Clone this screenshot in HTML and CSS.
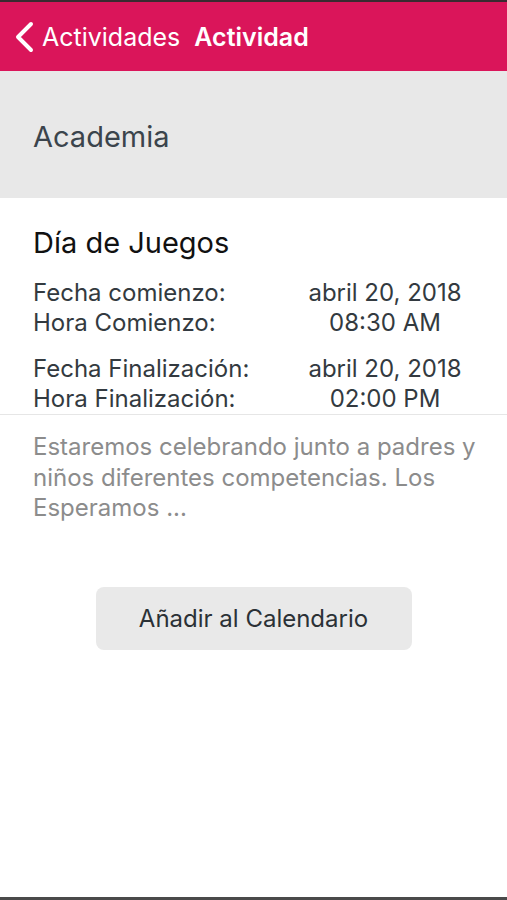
FILE: index.html
```html
<!DOCTYPE html>
<html lang="es">
<head>
    <meta charset="UTF-8">
    <meta name="viewport" content="width=device-width, initial-scale=1.0">
    <title>Actividad</title>
    <link rel="stylesheet" href="styles.css">
</head>
<body>
    <div class="screen">
        <header class="navbar">
            <a class="back" href="#">
                <svg class="chevron" width="20" height="32" viewBox="0 0 20 32">
                    <path d="M17 3 L4 16 L17 29" fill="none" stroke="#fff" stroke-width="4" stroke-linecap="round" stroke-linejoin="round"/>
                </svg>
                <span>Actividades</span>
            </a>
            <span class="nav-title">Actividad</span>
        </header>

        <section class="category">Academia</section>

        <section class="event">
            <h1>Día de Juegos</h1>
            <div class="times">
                <span>Fecha comienzo:</span><span class="val">abril 20, 2018</span>
                <span>Hora Comienzo:</span><span class="val">08:30 AM</span>
            </div>
            <div class="times">
                <span>Fecha Finalización:</span><span class="val">abril 20, 2018</span>
                <span>Hora Finalización:</span><span class="val">02:00 PM</span>
            </div>
        </section>

        <p class="description">Estaremos celebrando junto a padres y niños diferentes competencias. Los Esperamos ...</p>

        <div class="actions">
            <button class="add-cal">Añadir al Calendario</button>
        </div>
    </div>
</body>
</html>
```

FILE: styles.css
```css
* {
    box-sizing: border-box;
}
body {
    margin: 0;
    background: #fff;
    font-family: Inter, "Liberation Sans", Arial, sans-serif;
}
.screen {
    height: 900px;
    display: flex;
    flex-direction: column;
    border-top: 2px solid #3a2a30;
    border-bottom: 3px solid #4a4a4a;
}
.navbar {
    height: 69px;
    background: #da155a;
    display: flex;
    align-items: center;
    padding: 0 0 0 14px;
    color: #fff;
    font-size: 25px;
}
.back {
    display: flex;
    align-items: center;
    gap: 8px;
    color: #fff;
    text-decoration: none;
}
.nav-title {
    font-weight: 600;
    margin-left: 14px;
}
.category {
    height: 127px;
    background: #e8e8e8;
    display: flex;
    align-items: center;
    padding: 4px 33px 0;
    color: #3b444c;
    font-size: 29px;
}
.event {
    padding: 29px 33px 0;
    border-bottom: 1px solid #e6e6e6;
}
.event h1 {
    margin: 0 0 19px;
    font-weight: normal;
    font-size: 29px;
    line-height: 32px;
    color: #111;
}
.times {
    display: grid;
    grid-template-columns: 263px 1fr;
    font-size: 24px;
    line-height: 30px;
    color: #333a40;
    margin-bottom: 16px;
}
.times:last-child {
    margin-bottom: 0;
}
.times .val {
    text-align: center;
}
.description {
    margin: 17px 10px 0 33px;
    font-size: 24px;
    line-height: 30.5px;
    color: #8c8c8c;
}
.actions {
    display: flex;
    justify-content: center;
    margin-top: 63px;
}
.add-cal {
    width: 316px;
    height: 63px;
    border: none;
    border-radius: 8px;
    background: #e9e9e9;
    color: #2b3136;
    font-family: inherit;
    font-size: 24px;
}
```
